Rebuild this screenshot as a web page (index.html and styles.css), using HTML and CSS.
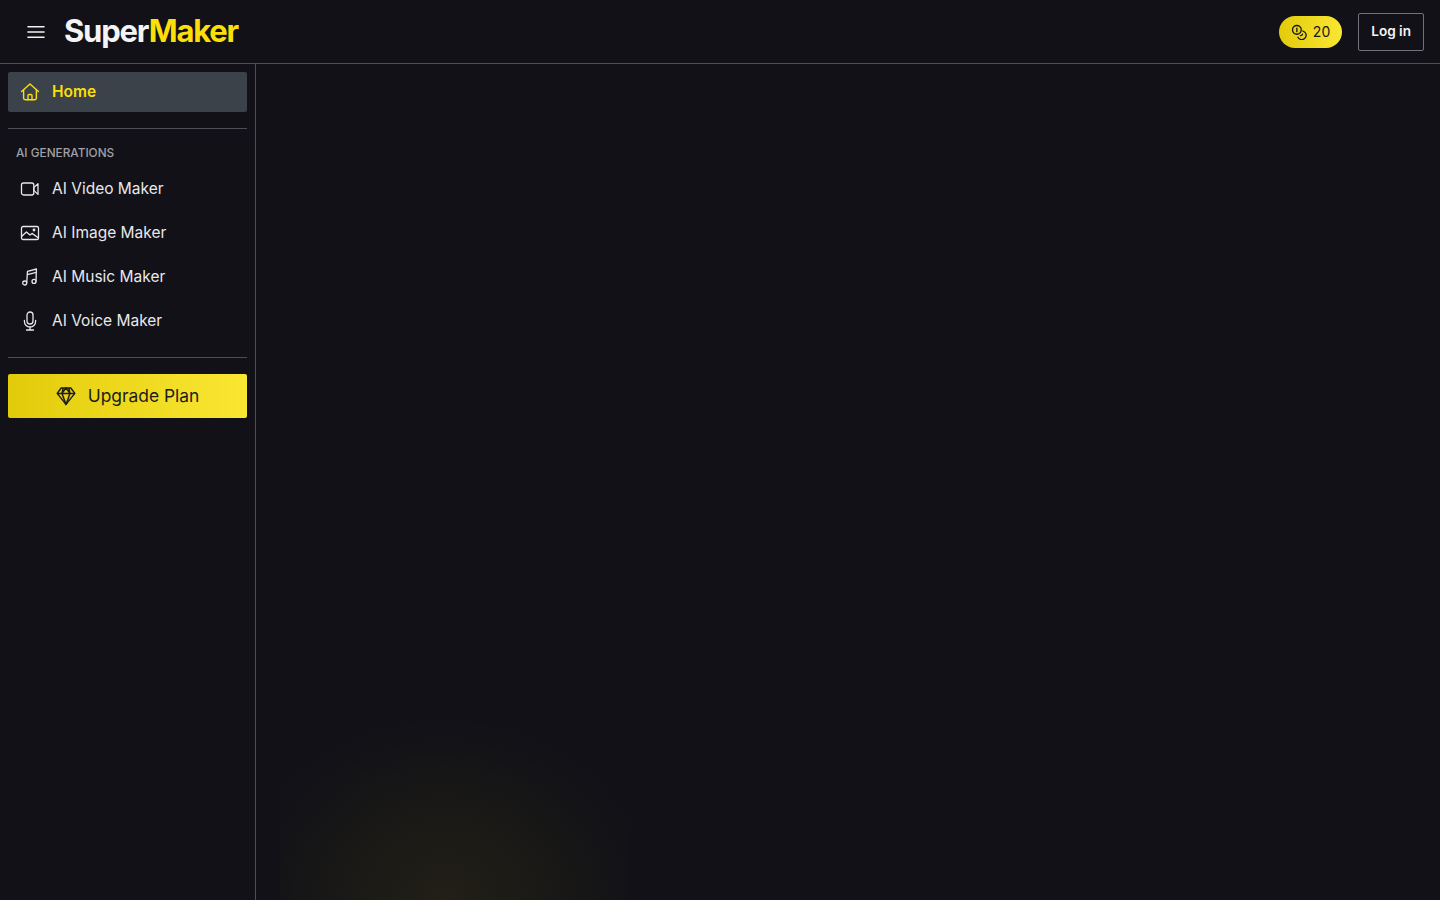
FILE: index.html
```html
<!DOCTYPE html>
<html lang="en">
<head>
  <meta charset="UTF-8" />
  <meta name="viewport" content="width=device-width, initial-scale=1.0"/>
  <title>SuperMaker</title>
  <link rel="stylesheet" href="styles.css">
</head>
<body>
  <header class="topbar">
    <div class="topbar-left">
      <button class="menu-btn" aria-label="Menu">
        <svg width="24" height="24" viewBox="0 0 24 24" fill="none" stroke="currentColor" stroke-width="1.6" stroke-linecap="round">
          <path d="M4 6.8h16M4 12h16M4 17.2h16"/>
        </svg>
      </button>
      <a class="logo" href="#">Super<span class="logo-accent">Maker</span></a>
    </div>
    <div class="topbar-right">
      <div class="credits">
        <svg width="16" height="16" viewBox="0 0 18 18" fill="none" stroke="currentColor" stroke-width="1.5" stroke-linecap="round">
          <circle cx="6.6" cy="6.6" r="4.9"/>
          <path d="M6.6 4.6v4"/>
          <path d="M13.4 7.9a4.9 4.9 0 1 1-5.6 7"/>
          <path d="M13 11.4a2.2 2.2 0 0 1-2.4 1.6"/>
        </svg>
        <span>20</span>
      </div>
      <button class="login-btn">Log in</button>
    </div>
  </header>

  <div class="layout">
    <aside class="sidebar">
      <a class="nav-item active" href="#">
        <svg class="nav-icon" width="20" height="20" viewBox="0 0 20 20" fill="none" stroke="currentColor" stroke-width="1.4" stroke-linejoin="round" stroke-linecap="round">
          <path d="M1.6 9.6 10 1.9l8.4 7.700"/>
          <path d="M3.6 8v8.100a1.600 1.600 0 0 0 1.600 1.600h9.600a1.600 1.600 0 0 0 1.600-1.600V8"/>
          <path d="M8 17.700v-4.200a1 1 0 0 1 1-1h2a1 1 0 0 1 1 1v4.200"/>
        </svg>
        <span>Home</span>
      </a>

      <div class="divider first"></div>

      <div class="section-label">AI GENERATIONS</div>

      <a class="nav-item" href="#">
        <svg class="nav-icon" width="20" height="20" viewBox="0 0 20 20" fill="none" stroke="currentColor" stroke-width="1.3" stroke-linejoin="round">
          <rect x="1.500" y="4" width="12.300" height="12" rx="2"/>
          <path d="M13.800 8.600 18 4.600v10.800l-4.200-4z"/>
        </svg>
        <span>AI Video Maker</span>
      </a>
      <a class="nav-item" href="#">
        <svg class="nav-icon" width="20" height="20" viewBox="0 0 20 20" fill="none" stroke="currentColor" stroke-width="1.3" stroke-linejoin="round" stroke-linecap="round">
          <rect x="1.500" y="3.500" width="17" height="13" rx="1.600"/>
          <path d="M1.800 13.200 6.400 9l3.600 3 2-1.600 6.200 4.400"/>
          <circle cx="14" cy="7" r=".8"/>
        </svg>
        <span>AI Image Maker</span>
      </a>
      <a class="nav-item" href="#">
        <svg class="nav-icon" width="20" height="20" viewBox="0 0 20 20" fill="none" stroke="currentColor" stroke-width="1.3" stroke-linejoin="round">
          <circle cx="4.700" cy="16" r="2"/>
          <circle cx="14" cy="14.400" r="2"/>
          <path d="M6.700 16 7.500 4.300 16.400 2 16 14.400"/>
          <path d="M7.300 7.600 16.200 5.400"/>
        </svg>
        <span>AI Music Maker</span>
      </a>
      <a class="nav-item" href="#">
        <svg class="nav-icon" width="20" height="20" viewBox="0 0 20 20" fill="none" stroke="currentColor" stroke-width="1.3" stroke-linecap="round">
          <rect x="7" y="1" width="6" height="12" rx="3"/>
          <path d="M4.400 9.500v1a5.600 5.600 0 0 0 11.200 0v-1"/>
          <path d="M10 16v3M6.500 19h7"/>
        </svg>
        <span>AI Voice Maker</span>
      </a>

      <div class="divider"></div>

      <button class="upgrade-btn">
        <svg width="20" height="20" viewBox="0 0 20 20" fill="none" stroke="currentColor" stroke-width="1.500" stroke-linejoin="round">
          <path d="M5.200 2h9.600l4 5.400L10 18.400 1.200 7.400z"/>
          <path d="M1.200 7.400h17.600M7.200 2 6 7.400l4 11 4-11L12.800 2M6 7.400 10 2l4 5.400"/>
        </svg>
        <span>Upgrade Plan</span>
      </button>
    </aside>

    <main class="content">
      <div class="glow"></div>
    </main>
  </div>
</body>
</html>
```

FILE: styles.css
```css
* {
  box-sizing: border-box;
}

html, body {
  height: 100%;
}

body {
  margin: 0;
  font-family: Inter, "Noto Sans", sans-serif;
  background: #111117;
  color: #e8e8ec;
  display: flex;
  flex-direction: column;
  overflow: hidden;
}

a {
  color: inherit;
  text-decoration: none;
}

button {
  font-family: inherit;
  cursor: pointer;
}

.topbar {
  height: 64px;
  flex-shrink: 0;
  display: flex;
  align-items: center;
  justify-content: space-between;
  padding: 0 16px 0 24px;
  border-bottom: 1px solid #4d4d58;
}

.topbar-left {
  display: flex;
  align-items: center;
  gap: 16px;
}

.menu-btn {
  width: 24px;
  height: 24px;
  padding: 0;
  border: none;
  background: none;
  color: #f2f2f2;
}

.logo {
  font-size: 31px;
  font-weight: 700;
  letter-spacing: -1.2px;
  line-height: 38px;
  margin-bottom: 2px;
  color: #f4f4f4;
}

.logo-accent {
  color: #fadf0a;
}

.topbar-right {
  display: flex;
  align-items: center;
  gap: 16px;
}

.credits {
  height: 32px;
  padding: 0 12px;
  display: flex;
  align-items: center;
  gap: 6px;
  border-radius: 16px;
  font-size: 14px;
  color: #17171c;
  background: linear-gradient(90deg, #e2cb0a, #fae733);
}

.login-btn {
  height: 38px;
  padding: 0 12px 2px;
  font-size: 13.6px;
  font-weight: 600;
  color: #f4f4f4;
  background: none;
  border: 1px solid #71717c;
  border-radius: 2px;
}

.layout {
  flex: 1;
  display: flex;
  min-height: 0;
}

.sidebar {
  width: 256px;
  flex-shrink: 0;
  padding: 8px 8px 0;
  border-right: 1px solid #4d4d58;
}

.nav-item {
  height: 44px;
  padding-left: 12px;
  display: flex;
  align-items: center;
  gap: 12px;
  font-size: 15.5px;
  color: #e8e8ec;
  border-radius: 2px;
}

.nav-item span {
  margin-bottom: 2px;
}

.nav-item.active {
  height: 40px;
  font-weight: 600;
  color: #fadf0a;
  background: #3b4249;
}

.nav-icon {
  flex-shrink: 0;
}

.divider {
  height: 1px;
  margin: 14px 0 16px;
  background: #4d4d58;
}

.divider.first {
  margin: 16px 0 0;
}

.section-label {
  padding: 17px 0 6px 8px;
  font-size: 11.8px;
  line-height: 15px;
  font-weight: 500;
  color: #a0a0a6;
}

.upgrade-btn {
  width: 100%;
  height: 44px;
  display: flex;
  align-items: center;
  justify-content: center;
  gap: 12px;
  border: none;
  border-radius: 2px;
  font-size: 17.4px;
  font-weight: 400;
  color: #1d1d1d;
  background: linear-gradient(90deg, #e2cb0a, #fae733);
}

.upgrade-btn span {
  margin-bottom: 2px;
}

.content {
  flex: 1;
  position: relative;
  overflow: hidden;
}

/* faint yellow light rising from the bottom edge */
.glow {
  position: absolute;
  left: 24px;
  bottom: 0;
  width: 350px;
  height: 190px;
  background: radial-gradient(ellipse 210px 185px at 47% 100%, rgba(250, 223, 10, 0.07), rgba(250, 223, 10, 0.042) 40%, rgba(250, 223, 10, 0.015) 78%, rgba(250, 223, 10, 0) 100%);
}
```
